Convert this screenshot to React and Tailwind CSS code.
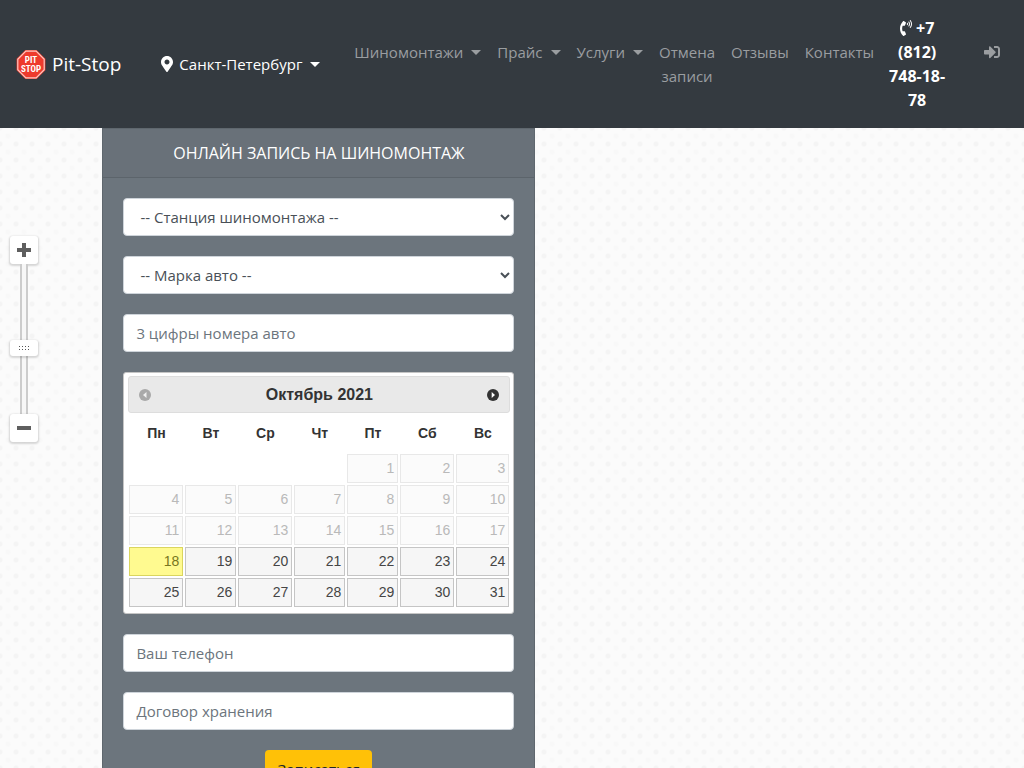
import React from 'react';
import { FaMapMarkerAlt, FaPhoneVolume, FaSignInAlt } from 'react-icons/fa';

const WEEKDAYS = ['Пн', 'Вт', 'Ср', 'Чт', 'Пт', 'Сб', 'Вс'];
const TODAY = 18;
const WEEKS = [
  [null, null, null, null, 1, 2, 3],
  [4, 5, 6, 7, 8, 9, 10],
  [11, 12, 13, 14, 15, 16, 17],
  [18, 19, 20, 21, 22, 23, 24],
  [25, 26, 27, 28, 29, 30, 31],
];

const CONTROL =
  'block h-[38px] w-full rounded border border-[#ced4da] bg-white px-3 text-[15px] text-[#495057] placeholder:text-[#6c757d] placeholder:opacity-100';

function Caret() {
  return (
    <span className="h-0 w-0 shrink-0 border-x-5 border-t-5 border-x-transparent border-t-current" />
  );
}

function Logo() {
  return (
    <svg viewBox="0 0 30 30" className="h-[30px] w-[30px]" aria-hidden="true">
      <polygon points="9.4,1 20.6,1 29.4,9.8 29.4,21.2 20.6,30 9.4,30 0.6,21.2 0.6,9.8" fill="#ee3a2d" />
      <polygon
        points="9.9,2.2 20.1,2.2 28.2,10.3 28.2,20.7 20.1,28.8 9.9,28.8 1.8,20.7 1.8,10.3"
        fill="#ee3a2d"
        stroke="#fbc9c3"
        strokeWidth="1.2"
      />
      <g fill="#fff" fontFamily="'Roboto Condensed', 'Open Sans Condensed', Roboto, sans-serif" fontWeight="700" textAnchor="middle">
        <text x="15" y="14" fontSize="9">PIT</text>
        <text x="15" y="22.6" fontSize="9">STOP</text>
      </g>
    </svg>
  );
}

function MenuButton({ children }) {
  return (
    <button type="button" className="flex items-center gap-2 whitespace-nowrap p-2">
      {children}
      <Caret />
    </button>
  );
}

function Header() {
  return (
    <header className="flex items-center bg-[#343a40] px-4 py-4 leading-6 text-white">
      <a href="#home" className="flex items-center gap-1.5 text-[19px] whitespace-nowrap">
        <Logo />
        Pit-Stop
      </a>
      <button type="button" className="ml-10 flex items-center gap-2 whitespace-nowrap">
        <span className="flex items-center gap-1.5">
          <FaMapMarkerAlt className="h-4 w-3" />
          Санкт-Петербург
        </span>
        <Caret />
      </button>
      <nav className="ml-6 flex flex-1 items-center text-[#9a9da0]">
        <ul className="ml-0.5 flex items-start">
          <li><MenuButton>Шиномонтажи</MenuButton></li>
          <li><MenuButton>Прайс</MenuButton></li>
          <li><MenuButton>Услуги</MenuButton></li>
          <li><a href="#cancel" className="block w-[72px] p-2 text-center">Отмена записи</a></li>
          <li><a href="#reviews" className="block p-2">Отзывы</a></li>
          <li><a href="#contacts" className="block p-2">Контакты</a></li>
        </ul>
        <a href="tel:+78127481878" className="w-[70px] text-center text-base leading-6 font-bold text-white">
          <FaPhoneVolume className="inline h-4 w-3 align-[-2px]" /> +7 (812) 748-18-78
        </a>
        <div className="ml-auto flex h-16 items-start px-2 py-3">
          <a href="#login" aria-label="Войти"><FaSignInAlt className="h-4 w-4" /></a>
        </div>
      </nav>
    </header>
  );
}

function ZoomControl() {
  const button =
    'flex h-7 w-7 items-center justify-center rounded-[3px] bg-white shadow-[0_1px_2px_1px_rgba(0,0,0,0.15)]';
  return (
    <div className="absolute left-2.5 top-27 flex flex-col items-center">
      <button type="button" aria-label="Приблизить" className={button}>
        <svg viewBox="0 0 14 14" className="h-3.5 w-3.5" fill="#5f5f5f"><path d="M5 0h4v5h5v4H9v5H5V9H0V5h5z" /></svg>
      </button>
      <div className="flex h-[150px] w-2 items-start justify-center border-x-2 border-[#ccc] bg-[#f7f7f7] pt-[76px]">
        <button
          type="button"
          aria-label="Масштаб"
          className="flex h-4 w-7 shrink-0 items-center justify-center rounded-[3px] bg-white shadow-[0_1px_2px_1px_rgba(0,0,0,0.15)]"
        >
          <svg viewBox="0 0 11 4" className="h-1 w-[11px]" fill="#555" shapeRendering="crispEdges">
            <path d="M0 0h1v1H0zM3 0h1v1H3zM6 0h1v1H6zM9 0h1v1H9zM0 3h1v1H0zM3 3h1v1H3zM6 3h1v1H6zM9 3h1v1H9z" />
          </svg>
        </button>
      </div>
      <button type="button" aria-label="Отдалить" className={button}>
        <svg viewBox="0 0 14 4" className="h-1 w-3.5" fill="#5f5f5f"><path d="M0 0h14v4H0z" /></svg>
      </button>
    </div>
  );
}

function dayClass(day) {
  const base = 'block h-[29px] w-full border pr-[3px] text-right';
  if (day === TODAY) return `${base} border-[#dad55e] bg-[#fffa90] text-[#777620]`;
  if (day < TODAY) return `${base} border-[#e8e8e8] bg-[#fbfbfb] text-[#b9b9b9]`;
  return `${base} border-[#c5c5c5] bg-[#f6f6f6] text-[#454545]`;
}

function Calendar() {
  return (
    <div className="rounded-[3px] border border-[#c5c5c5] bg-white p-[3px] pb-[5px] font-['Liberation_Sans',Arial,sans-serif] text-[#333]">
      <div className="ml-px flex h-[37px] items-center justify-between rounded-[3px] border border-[#ddd] bg-[#e9e9e9] px-2.5">
        <button type="button" aria-label="Предыдущий месяц" disabled className="opacity-35">
          <svg viewBox="0 0 12 12" className="h-3 w-3"><circle cx="6" cy="6" r="6" fill="#333" /><path d="M7.5 3v6L4 6z" fill="#fff" /></svg>
        </button>
        <h2 className="text-base leading-7 font-bold">Октябрь 2021</h2>
        <button type="button" aria-label="Следующий месяц">
          <svg viewBox="0 0 12 12" className="h-3 w-3"><circle cx="6" cy="6" r="6" fill="#333" /><path d="M4.7 3v6L8 6z" fill="#fff" /></svg>
        </button>
      </div>
      <table className="mx-px w-[calc(100%-2px)] table-fixed border-collapse text-[14px] leading-[27px]">
        <colgroup>
          <col className="w-[56px]" />
          <col className="w-[53px]" />
          <col className="w-[56px]" />
          <col className="w-[53px]" />
          <col className="w-[53px]" />
          <col className="w-[56px]" />
          <col className="w-[55px]" />
        </colgroup>
        <thead>
          <tr className="h-10">
            {WEEKDAYS.map((d) => <th key={d} scope="col" className="font-bold">{d}</th>)}
          </tr>
        </thead>
        <tbody>
          {WEEKS.map((week, i) => (
            <tr key={i}>
              {week.map((day, j) => (
                <td key={j} className="p-px">
                  {day && <button type="button" disabled={day <= TODAY} className={dayClass(day)}>{day}</button>}
                </td>
              ))}
            </tr>
          ))}
        </tbody>
      </table>
    </div>
  );
}

function BookingForm() {
  return (
    <section className="ml-[10%] w-[433px] max-w-full border border-[#5f676e] bg-[#6c757d]">
      <h1 className="border-b border-[#5c646b] bg-[#697179] px-5 py-3 text-center text-base leading-6 text-white uppercase">
        Онлайн запись на шиномонтаж
      </h1>
      <form className="flex flex-col gap-5 p-5">
        <select aria-label="Станция шиномонтажа" className={CONTROL}>
          <option>-- Станция шиномонтажа --</option>
        </select>
        <select aria-label="Марка авто" className={CONTROL}>
          <option>-- Марка авто --</option>
        </select>
        <input type="text" aria-label="3 цифры номера авто" placeholder="3 цифры номера авто" className={CONTROL} />
        <Calendar />
        <input type="tel" aria-label="Ваш телефон" placeholder="Ваш телефон" className={CONTROL} />
        <input type="text" aria-label="Договор хранения" placeholder="Договор хранения" className={CONTROL} />
        <button type="submit" className="h-[38px] self-center rounded bg-[#ffc107] px-3 text-[#212529]">
          Записаться
        </button>
      </form>
    </section>
  );
}

export default function App() {
  return (
    <div className="flex min-h-screen flex-col font-['Open_Sans','Noto_Sans',sans-serif] text-[15px]">
      <Header />
      <main className="relative flex-1 bg-[#fbfbfb] bg-[radial-gradient(circle_at_8px_8px,#f4f4f4_2px,transparent_3px),radial-gradient(circle_at_0px_0px,#f8f8f8_2px,transparent_3px),radial-gradient(circle_at_16px_0px,#f8f8f8_2px,transparent_3px),radial-gradient(circle_at_0px_16px,#f8f8f8_2px,transparent_3px),radial-gradient(circle_at_16px_16px,#f8f8f8_2px,transparent_3px)] bg-[size:16px_16px] bg-[position:8px_8px]">
        <BookingForm />
        <ZoomControl />
      </main>
    </div>
  );
}
